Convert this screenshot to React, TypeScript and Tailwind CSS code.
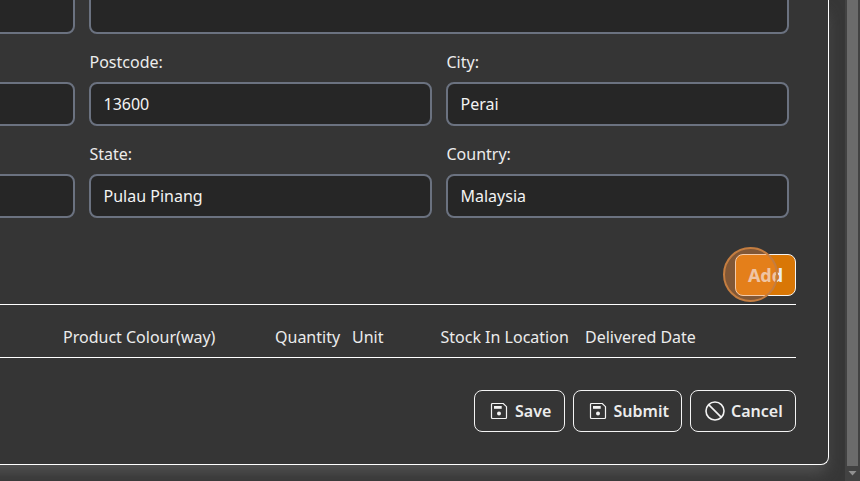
import type { ReactNode } from "react";

function Input({ value = "" }: { value?: string }) {
  return (
    <input
      readOnly
      value={value}
      className="block h-11 w-full rounded-lg border-2 border-[#6b7280] bg-[#262626] px-[12.5px] text-base text-[#f3f3f3] outline-none"
    />
  );
}

function Field({ label, value }: { label: string; value: string }) {
  return (
    <label className="block">
      <span className="flex h-12 items-center pl-[0.5px] pt-2">{label}</span>
      <Input value={value} />
    </label>
  );
}

function SaveIcon() {
  return (
    <svg width="18" height="18" viewBox="0 0 18 18" fill="none" className="shrink-0">
      <path d="M2.5 1.5h10.8l3.2 3.2v10.8a1 1 0 0 1-1 1h-13a1 1 0 0 1-1-1v-13a1 1 0 0 1 1-1Z" stroke="#f3f3f3" strokeWidth="1.2" />
      <path d="M4 4h7.7v2.8H4Z" fill="#f3f3f3" />
      <circle cx="9" cy="11.5" r="2" fill="#f3f3f3" />
    </svg>
  );
}

function CancelIcon() {
  return (
    <svg width="20" height="20" viewBox="0 0 20 20" fill="none" stroke="#f3f3f3" strokeWidth="1.6" className="shrink-0">
      <circle cx="10" cy="10" r="9" />
      <path d="M3.6 3.6l12.8 12.8" />
    </svg>
  );
}

function ActionButton({ icon, label, className }: { icon: ReactNode; label: string; className: string }) {
  return (
    <button className={`flex h-[42px] items-center rounded-lg border border-[#f3f3f3] font-semibold ${className}`}>
      {icon}
      <span>{label}</span>
    </button>
  );
}

export default function App() {
  return (
    <div className="flex h-[481px] w-[860px] overflow-hidden bg-[#393939] font-['Noto_Sans',sans-serif] text-base leading-6 text-[#ececec]">
      <div className="w-[845px] shrink-0 overflow-hidden bg-[#373737]">
        <main className="-ml-10 h-[465px] w-[869px] rounded-br-lg border-r border-b border-white bg-[#353535] pl-10 shadow-[0_10px_15px_-3px_rgba(90,90,90,0.8)]">
          <section className="grid h-[218px] w-[789px] grid-cols-[75px_343px_343px] gap-x-3.5">
            <div className="flex flex-col gap-12">
              <div className="-ml-3 -mt-2.5"><Input /></div>
              <div className="-ml-3"><Input /></div>
              <div className="-ml-3"><Input /></div>
            </div>
            <div className="col-span-2">
              <div className="-mt-2.5"><Input /></div>
              <div className="grid grid-cols-2 gap-x-3.5">
                <Field label="Postcode:" value="13600" />
                <Field label="City:" value="Perai" />
                <Field label="State:" value="Pulau Pinang" />
                <Field label="Country:" value="Malaysia" />
              </div>
            </div>
          </section>

          <div className="flex h-[86px] w-[796px] justify-end pt-9">
            <div className="relative h-[42px] w-[61px]">
              <button className="h-[42px] w-[61px] rounded-lg border border-[#f3f3f3] bg-[#d97706] text-lg font-bold">Add</button>
              <span className="absolute -left-3 -top-[7px] h-[55px] w-[55px] rounded-full border-2 border-[#c47d40] bg-[#f68c3a]/40" />
            </div>
          </div>

          <div className="flex h-[54px] w-[796px] items-center whitespace-nowrap border-y border-white pl-[63px] pt-3">
            <span className="w-[212px]">Product Colour(way)</span>
            <span className="w-[77px]">Quantity</span>
            <span className="w-[88.5px]">Unit</span>
            <span className="w-[144.5px]">Stock In Location</span>
            <span>Delivered Date</span>
          </div>

          <div className="flex w-[796px] justify-end gap-2 pt-8">
            <ActionButton icon={<SaveIcon />} label="Save" className="w-[91px] gap-[7px] pl-[15px]" />
            <ActionButton icon={<SaveIcon />} label="Submit" className="w-[109px] gap-[6.5px] pl-[15px]" />
            <ActionButton icon={<CancelIcon />} label="Cancel" className="w-[106px] gap-1.5 pl-3.5" />
          </div>
        </main>
      </div>

      <aside className="flex w-[15px] flex-col items-center bg-[#424242]">
        <div className="h-[466px] w-[11px] bg-[#6b6b6b]" />
        <svg width="9" height="5" viewBox="0 0 9 5" className="mt-[5px]">
          <path d="M0.5 0h8l-4 4.5Z" fill="#909090" />
        </svg>
      </aside>
    </div>
  );
}
